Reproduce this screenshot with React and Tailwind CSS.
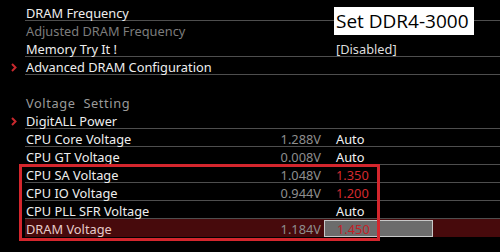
import React from 'react';

const Chevron = () => (
  <svg width="6" height="9" viewBox="0 0 6 9" className="block">
    <path d="M1 1 L4.5 4.5 L1 8" fill="none" stroke="#c8282d" strokeWidth="2" />
  </svg>
);

const Row = ({ label, reading, setting, labelClass = 'text-[#eeeeee]', settingClass = 'text-[#f2f2f2]', line = true, arrow = false, children, rowClass = '' }) => (
  <div className="flex h-[18px]">
    <div className="w-[25px] flex items-center justify-end pr-[8px] pt-[2px]">{arrow && <Chevron />}</div>
    <div className={`flex-1 flex items-center pt-[2px] ${line ? 'border-b border-[#4e4e4e]' : ''} ${rowClass}`}>
      <div className={`w-[240px] pl-[1px] whitespace-pre ${labelClass}`}>{label}</div>
      <div className="w-[56px] text-right text-[#8e8e8e]">{reading}</div>
      {children || <div className={`ml-[15px] ${settingClass}`}>{setting}</div>}
    </div>
  </div>
);

export default function App() {
  return (
    <div
      className="relative w-[500px] h-[252px] bg-black overflow-hidden pt-[3px] text-[12.8px] leading-[16px]"
      style={{ fontFamily: '"Noto Sans", "Open Sans", sans-serif' }}
    >
      <Row label="DRAM Frequency" />
      <Row label="Adjusted DRAM Frequency" labelClass="text-[#7c7c7c]" line={false} />
      <Row label="Memory Try It !" setting="[Disabled]" settingClass="text-[#dddddd]" />
      <Row label="Advanced DRAM Configuration" arrow />
      <Row label="" line={false} />
      <Row label="Voltage  Setting" labelClass="text-[#9a9a9a] tracking-[0.6px]" line={false} />
      <Row label="DigitALL Power" arrow />
      <Row label="CPU Core Voltage" reading="1.288V" setting="Auto" />
      <Row label="CPU GT Voltage" reading="0.008V" setting="Auto" />
      <Row label="CPU SA Voltage" reading="1.048V" setting="1.350" settingClass="text-[#d42a2e]" />
      <Row label="CPU IO Voltage" reading="0.944V" setting="1.200" settingClass="text-[#d42a2e]" />
      <Row label="CPU PLL SFR Voltage" setting="Auto" />
      <Row label="DRAM Voltage" reading="1.184V" labelClass="text-[#e6caca]" rowClass="bg-[#470a0c]" line={false}>
        <div className="ml-[3px] -mt-[2px] w-[109px] h-[17px] border border-[#c8c8c8] bg-[#6c6c6c] pl-[12px] pt-[1px] text-[#c42026] leading-[15px]">
          1.450
        </div>
      </Row>

      <div
        className="absolute left-[334px] top-[7px] w-[140px] h-[28px] bg-white text-black text-[19px] leading-[28px] pl-[2px]"
        style={{ fontFamily: '"Open Sans", sans-serif' }}
      >
        Set DDR4-3000
      </div>
      <div className="absolute left-[19px] top-[164px] w-[361px] h-[77px] border-[3px] border-[#d4262d]" />
    </div>
  );
}
